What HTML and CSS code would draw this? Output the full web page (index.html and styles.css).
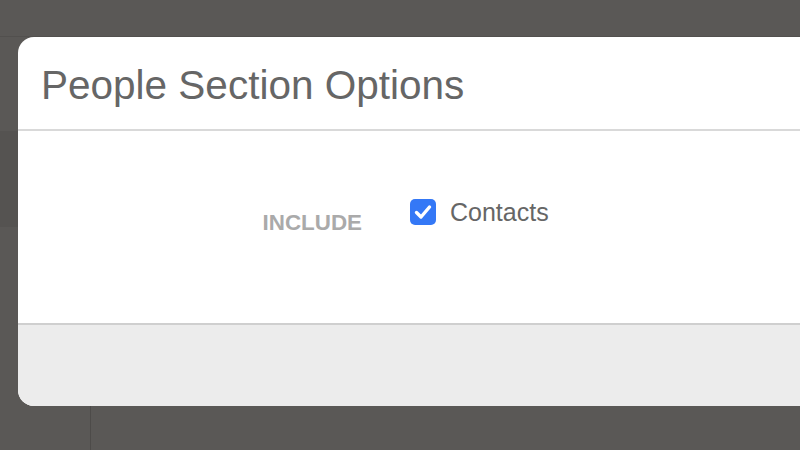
FILE: index.html
```html
<!DOCTYPE html>
<html>
<head>
<meta charset="utf-8">
<link rel="stylesheet" href="styles.css">
</head>
<body>
<div class="app">
  <div class="topbar"></div>
  <div class="main">
    <div class="sidebar">
      <div class="side-top"></div>
      <div class="side-active"></div>
      <div class="side-rest"></div>
    </div>
    <div class="content"></div>
  </div>
</div>
<div class="modal">
  <div class="modal-header">
    <h1 class="modal-title">People Section Options</h1>
  </div>
  <div class="modal-body">
    <div class="form-row">
      <div class="form-label">INCLUDE</div>
      <label class="check">
        <span class="checkbox">
          <svg width="26" height="26" viewBox="0 0 26 26"><polyline points="6.5,13.5 11,18 19.5,8" fill="none" stroke="#fff" stroke-width="3.4" stroke-linecap="round" stroke-linejoin="round"/></svg>
        </span>
        <span class="check-text">Contacts</span>
      </label>
    </div>
  </div>
  <div class="modal-footer"></div>
</div>
</body>
</html>
```
FILE: styles.css
```css
html, body {
  margin: 0;
  padding: 0;
}
body {
  width: 800px;
  height: 450px;
  overflow: hidden;
  background: #5a5856;
  font-family: "Liberation Sans", Arial, sans-serif;
  position: relative;
}
.app {
  display: flex;
  flex-direction: column;
  height: 450px;
}
.topbar {
  height: 36px;
  border-bottom: 1px solid #52504e;
}
.main {
  flex: 1;
  display: flex;
}
.sidebar {
  width: 90px;
  border-right: 1px solid #4d4b49;
  display: flex;
  flex-direction: column;
}
.side-top {
  height: 94px;
}
.side-active {
  height: 96px;
  background: #555351;
}
.side-rest {
  flex: 1;
}
.content {
  flex: 1;
}
.modal {
  position: absolute;
  left: 18px;
  right: 0;
  top: 37px;
  height: 369px;
  background: #fff;
  border-radius: 16px 0 0 16px;
  overflow: hidden;
  display: flex;
  flex-direction: column;
}
.modal-header {
  border-bottom: 2px solid #d9d9d9;
  display: flex;
  align-items: center;
  padding-left: 23px;
  box-sizing: border-box;
  height: 94px;
}
.modal-title {
  margin: 0;
  font-size: 40.5px;
  font-weight: normal;
  color: #666;
  position: relative;
  top: 2px;
}
.modal-body {
  height: 192px;
  border-bottom: 2px solid #cfcfcf;
}
.form-row {
  display: flex;
  align-items: flex-start;
  padding-top: 68px;
}
.form-label {
  width: 344px;
  text-align: right;
  font-size: 22.4px;
  font-weight: bold;
  line-height: 26px;
  color: #aaa;
  margin-top: 11px;
}
.check {
  display: flex;
  align-items: center;
  margin-left: 48px;
}
.checkbox {
  width: 26px;
  height: 26px;
  border-radius: 5px;
  background: #3478f6;
  display: block;
}
.checkbox svg {
  display: block;
}
.check-text {
  margin-left: 14px;
  font-size: 25px;
  line-height: 26px;
  color: #666;
}
.modal-footer {
  flex: 1;
  background: #ececec;
}
```
